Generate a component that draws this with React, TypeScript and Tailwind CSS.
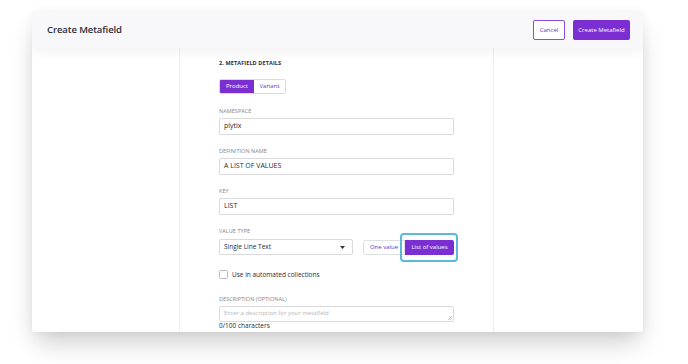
import React from 'react';

const font = { fontFamily: '"Open Sans", "Noto Sans", sans-serif' };

// Small uppercase label + input block
function Field({ label, value, placeholder }: { label: string; value?: string; placeholder?: string }) {
  return (
    <div className="mb-[13px]">
      <div className="text-[5.5px] leading-[7px] uppercase text-[#85858d] tracking-[0.01em]">{label}</div>
      <div className="mt-[3px] h-[17px] w-full border border-[#d9d9de] rounded-[2px] bg-white flex items-center px-[4px]">
        {value ? (
          <span className="text-[7px] text-[#2a2a33] font-medium">{value}</span>
        ) : (
          <span className="text-[6px] text-[#b5b5bb]">{placeholder}</span>
        )}
      </div>
    </div>
  );
}

export default function App() {
  return (
    <div className="w-[688px] h-[364px] bg-white overflow-hidden" style={font}>
      <div className="ml-[32px] mt-[12px] w-[611px] h-[320px] bg-white rounded-[3px] overflow-hidden shadow-[0_14px_24px_-4px_rgba(0,0,0,0.2),0_0_10px_rgba(0,0,0,0.05)] flex flex-col">
        {/* Header */}
        <div className="relative z-10 h-[36px] shrink-0 bg-[#f8f8fa] flex items-center justify-between pl-[15px] pr-[13px] shadow-[0_4px_10px_rgba(0,0,0,0.05)]">
          <h1 className="text-[9.5px] font-semibold text-[#2c2c38] tracking-[-0.01em]">Create Metafield</h1>
          <div className="flex items-center gap-[8px]">
            <button className="h-[20px] w-[32px] border border-[#8a4fd6] rounded-[2px] bg-white text-[6px] text-[#6b2fbf] font-medium">
              Cancel
            </button>
            <button className="h-[20px] w-[57px] rounded-[2px] bg-[#7b2fd2] text-[6px] text-white font-medium">
              Create Metafield
            </button>
          </div>
        </div>

        {/* Body */}
        <div className="flex flex-1 min-h-0">
          <div className="w-[147px] shrink-0" />
          <div className="w-[315px] shrink-0 border-l border-r border-[#ededf0] px-[39px] pt-[11px]">
            <div className="text-[5.5px] leading-[8px] font-bold text-[#2c2c38] tracking-[0.02em]">2. METAFIELD DETAILS</div>

            <div className="mt-[12px] flex h-[15px] w-[67px] border border-[#d9d9de] rounded-[2px] overflow-hidden">
              <div className="w-[34px] bg-[#7b2fd2] text-white text-[6px] font-medium flex items-center justify-center">Product</div>
              <div className="flex-1 bg-white text-[#6b2fbf] text-[6px] flex items-center justify-center">Variant</div>
            </div>

            <div className="mt-[14px]">
              <Field label="Namespace" value="plytix" />
              <Field label="Definition name" value="A LIST OF VALUES" />
              <Field label="Key" value="LIST" />

              <div>
                <div className="text-[5.5px] leading-[7px] uppercase text-[#85858d] tracking-[0.01em]">Value type</div>
                <div className="mt-[4px] flex items-center justify-between">
                  <div className="h-[16px] w-[134px] border border-[#d9d9de] rounded-[2px] flex items-center justify-between pl-[4px] pr-[7px]">
                    <span className="text-[6.5px] text-[#2a2a33] font-medium">Single Line Text</span>
                    <svg width="5" height="3" viewBox="0 0 5 3">
                      <path d="M0 0 L5 0 L2.5 3 Z" fill="#333" />
                    </svg>
                  </div>
                  <div className="flex items-center h-[15px] mt-[1px]">
                    <div className="h-full w-[42px] border border-[#e0e0e4] rounded-l-[2px] flex items-center justify-center text-[6px] text-[#6b2fbf] font-medium">
                      One value
                    </div>
                    <div className="relative h-full w-[49px]">
                      <div className="h-full w-full bg-[#7b2fd2] rounded-r-[2px] flex items-center justify-center text-[6px] text-white font-medium">
                        List of values
                      </div>
                      <div className="absolute -left-[5px] -right-[4px] -top-[7px] -bottom-[7px] rounded-[4px] border-2 border-[#5cb9d9]" />
                    </div>
                  </div>
                </div>
              </div>

              <div className="mt-[15px] flex items-center gap-[4px]">
                <div className="w-[9px] h-[9px] border border-[#b9b9c0] rounded-[1.5px] bg-white" />
                <span className="text-[6.5px] text-[#2a2a33]">Use in automated collections</span>
              </div>

              <div className="mt-[16px]">
                <div className="text-[5.5px] leading-[7px] uppercase text-[#85858d] tracking-[0.01em]">Description (optional)</div>
                <div className="relative mt-[3px] h-[16px] w-full border border-[#d9d9de] rounded-[2px] flex items-center px-[4px]">
                  <span className="text-[6px] text-[#b5b5bb]">Enter a description for your metafield</span>
                  <svg className="absolute right-[1px] bottom-[1px]" width="4" height="4" viewBox="0 0 4 4">
                    <path d="M4 0 L0 4 M4 2 L2 4" stroke="#999" strokeWidth="0.6" />
                  </svg>
                </div>
                <div className="text-[6.5px] leading-[8px] text-[#2a2a33]">0/100 characters</div>
              </div>
            </div>
          </div>
          <div className="flex-1" />
        </div>
      </div>
    </div>
  );
}
